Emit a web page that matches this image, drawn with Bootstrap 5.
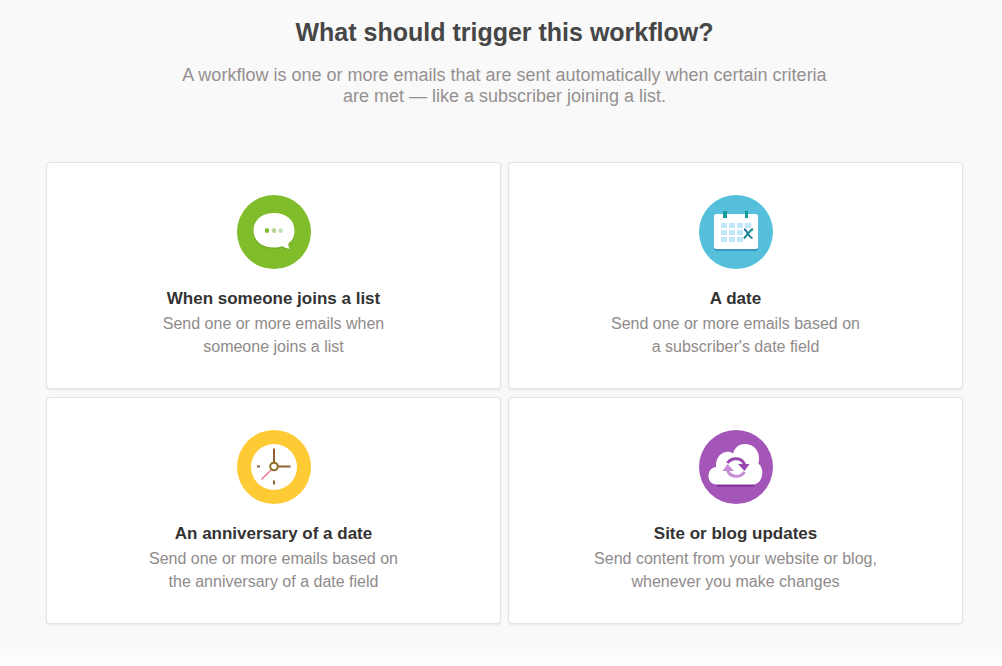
<!DOCTYPE html>
<html lang="en">
<head>
<meta charset="utf-8">
<meta name="viewport" content="width=device-width, initial-scale=1">
<title>Workflow trigger</title>
<link href="https://cdn.jsdelivr.net/npm/bootstrap@5.3.0/dist/css/bootstrap.min.css" rel="stylesheet">
<style>
body { font-family: "Liberation Sans", Arial, sans-serif; background: #fff; }
.trigger-page { background: linear-gradient(to top, #fff 0, #f9f9f9 20px); padding: 16px 39px 42px 46px; }
.page-title { font-size: 25px; line-height: 32px; font-weight: 700; color: #464646; margin-bottom: 17px; }
.page-intro { font-size: 18px; line-height: 21px; color: #959090; max-width: 680px; margin-bottom: 55px; }
.trigger-grid { --bs-gutter-x: 7px; --bs-gutter-y: 8px; }
.trigger-card { border: 1px solid #e3e3e3; border-radius: 4px; box-shadow: 0 1px 2px #e6e6e6; padding: 32px 16px 30px; color: #8f8b8b; font-size: 16px; line-height: 23px; }
.trigger-card:hover { border-color: #bbb; }
.trigger-icon { width: 74px; height: 74px; margin-bottom: 17px; }
.trigger-name { font-size: 17px; line-height: 26px; font-weight: 700; color: #333; }
</style>
</head>
<body>
<main class="trigger-page text-center">
  <h1 class="page-title">What should trigger this workflow?</h1>
  <p class="page-intro mx-auto">A workflow is one or more emails that are sent automatically when certain criteria<br>are met — like a subscriber joining a list.</p>
  <div class="row row-cols-1 row-cols-md-2 trigger-grid">
    <div class="col">
      <a href="#" class="card trigger-card h-100 align-items-center text-decoration-none">
        <svg class="trigger-icon" viewBox="0 0 74 74" aria-hidden="true">
          <circle cx="37" cy="37" r="37" fill="#80bd2b"/>
          <path d="M37 19.500C25 19.500 16 26 16 36.500S25 54 37 54c3 0 6-.2 8.500-1.200 2 1.500 5 2.500 7.500 2.500-1.500-1.500-1.800-3.500-1.500-5.500 4.500-3 6.500-7.500 6.500-12.800C58 26 49 19.500 37 19.500z" fill="#61931f" opacity=".4"/>
          <path d="M37 18C25 18 16.500 25 16.500 35.500S25 52.500 37 52.500c3 0 6-.2 8.500-1.200 2 1.500 5 2.500 7.500 2.500-1.500-1.500-1.800-3.500-1.500-5.500 4.500-3 6-7.500 6-12.800C57.500 25 49 18 37 18z" fill="#fff"/>
          <ellipse cx="30" cy="35.500" rx="2.200" ry="2.500" fill="#80bd2b"/>
          <ellipse cx="37" cy="35.500" rx="2.200" ry="2.500" fill="#b6d592"/>
          <ellipse cx="43.700" cy="35.500" rx="2.200" ry="2.500" fill="#c7dfb2"/>
        </svg>
        <span class="trigger-name">When someone joins a list</span>
        <span>Send one or more emails when<br>someone joins a list</span>
      </a>
    </div>
    <div class="col">
      <a href="#" class="card trigger-card h-100 align-items-center text-decoration-none">
        <svg class="trigger-icon" viewBox="0 0 74 74" aria-hidden="true">
          <circle cx="37" cy="37" r="37" fill="#56c0dc"/>
          <rect x="15" y="21" width="44" height="35" rx="3" fill="#3d97be"/>
          <rect x="15" y="19" width="44" height="35" rx="2.500" fill="#fff"/>
          <path d="M24 16h4v7h-4zM46 16h3v7h-3z" fill="#159c9b"/>
          <path d="M22 28h6v5h-6zM30 28h6v5h-6zM38 28h6v5h-6zM46 28h6v5h-6zM22 35h6v5h-6zM30 35h6v5h-6zM38 35h6v5h-6zM22 42h6v5h-6zM30 42h6v5h-6zM38 42h6v5h-6z" fill="#bfe7f8"/>
          <path d="M45 34c3.500 1 4 8.500 8.500 9" fill="none" stroke="#1b739f" stroke-width="2"/>
          <path d="M54 34c-3.500 1.500-5.500 5.500-9 9.500" fill="none" stroke="#128a91" stroke-width="2"/>
        </svg>
        <span class="trigger-name">A date</span>
        <span>Send one or more emails based on<br>a subscriber's date field</span>
      </a>
    </div>
    <div class="col">
      <a href="#" class="card trigger-card h-100 align-items-center text-decoration-none">
        <svg class="trigger-icon" viewBox="0 0 74 74" aria-hidden="true">
          <circle cx="37" cy="37" r="37" fill="#ffcb34"/>
          <circle cx="37" cy="37" r="23" fill="#fff"/>
          <path d="M34 40L24.500 49.500" stroke="#f1708b" stroke-width="1.500"/>
          <path d="M37 18.500V33M41 36.500h12.500M20 36.500h3M37 50.500v4" fill="none" stroke="#926032" stroke-width="2"/>
          <circle cx="37" cy="36.500" r="3.800" fill="#fff" stroke="#8f7026" stroke-width="2"/>
        </svg>
        <span class="trigger-name">An anniversary of a date</span>
        <span>Send one or more emails based on<br>the anniversary of a date field</span>
      </a>
    </div>
    <div class="col">
      <a href="#" class="card trigger-card h-100 align-items-center text-decoration-none">
        <svg class="trigger-icon" viewBox="0 0 74 74" aria-hidden="true">
          <circle cx="37" cy="37" r="37" fill="#a356b8"/>
          <path d="M18 55.500h37" stroke="#7c2f91" stroke-width="2"/>
          <path d="M18 54.500c-5 0-8.500-3-8.500-8.500 0-5 3-8.500 7.500-9-.5-8 3.500-14 10-15 3-.5 5 0 7 1.500C36 17 40.500 14 46 14c8.500 0 14.500 6.500 14 16-.1 1.500-.3 2.500-.7 3.500 2.700 2 4 5 4 9 0 7-4 12-9.300 12z" fill="#fff"/>
          <path d="M28.500 33c4.500-6.500 15-5.500 17 2" fill="none" stroke="#9747ae" stroke-width="3"/>
          <path d="M39 34h11.500l-5 7z" fill="#9747ae"/>
          <path d="M45.500 42c-4.500 6.500-15 5.500-17-2" fill="none" stroke="#c78dd6" stroke-width="3"/>
          <path d="M35 41H23.500l5-7z" fill="#c78dd6"/>
        </svg>
        <span class="trigger-name">Site or blog updates</span>
        <span>Send content from your website or blog,<br>whenever you make changes</span>
      </a>
    </div>
  </div>
</main>
<script src="https://cdn.jsdelivr.net/npm/bootstrap@5.3.0/dist/js/bootstrap.bundle.min.js"></script>
</body>
</html>
